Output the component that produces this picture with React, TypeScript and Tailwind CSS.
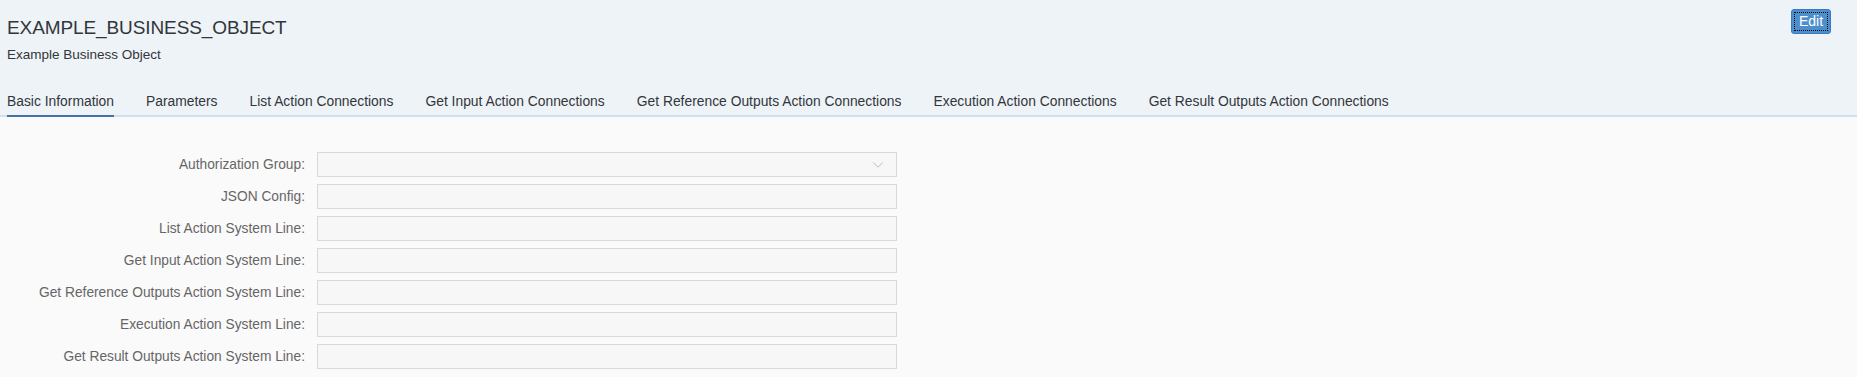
import { ChevronDown } from 'lucide-react'

const TABS = [
  'Basic Information',
  'Parameters',
  'List Action Connections',
  'Get Input Action Connections',
  'Get Reference Outputs Action Connections',
  'Execution Action Connections',
  'Get Result Outputs Action Connections',
]

const FIELDS: { label: string; select?: boolean }[] = [
  { label: 'Authorization Group:', select: true },
  { label: 'JSON Config:' },
  { label: 'List Action System Line:' },
  { label: 'Get Input Action System Line:' },
  { label: 'Get Reference Outputs Action System Line:' },
  { label: 'Execution Action System Line:' },
  { label: 'Get Result Outputs Action System Line:' },
]

export default function App() {
  return (
    <div className="min-h-[377px] bg-[#fafafa] font-['Liberation_Sans',Arial,sans-serif]">
      {/* object header */}
      <div className="bg-[#eef3f8]">
        <div className="flex items-start justify-between pl-[7px] pr-[26px]">
          <div className="pt-[15px]">
            <h1 className="text-[19px] leading-[25px] tracking-[-0.1px] text-[#32363a]">EXAMPLE_BUSINESS_OBJECT</h1>
            <p className="mt-[7px] text-[13.5px] leading-[16px] text-[#32363a]">Example Business Object</p>
          </div>
          <button className="mt-[9px] flex h-[25px] w-[40px] items-center justify-center rounded-[3px] border border-[#3a7bbf] bg-[#4d8fcc] text-[14px] text-white outline-1 outline-offset-[-4px] outline-dotted outline-black">
            Edit
          </button>
        </div>

        <div className="mt-[30px] flex gap-[32px] border-b-2 border-[#d1dfee] pl-[7px]">
          {TABS.map((tab, i) => (
            <div
              key={tab}
              className={
                'mb-[-2px] border-b-2 pb-[6px] text-[13.85px] leading-[16px] whitespace-nowrap text-[#32363a] ' +
                (i === 0 ? 'border-[#3f74a3]' : 'border-transparent')
              }
            >
              {tab}
            </div>
          ))}
        </div>
      </div>

      {/* form */}
      <div className="grid grid-cols-[305px_580px] items-center gap-x-3 gap-y-[7px] pt-[35px] pb-[7px]">
        {FIELDS.map((f) => (
          <div key={f.label} className="contents">
            <label className="text-right text-[13.75px] leading-[16px] text-[#666666]">{f.label}</label>
            <div className="flex h-[25px] items-center justify-end border border-[#d9d9d9] bg-[#f7f7f7] pr-[9px]">
              {f.select && <ChevronDown size={18} strokeWidth={1} className="text-[#aaaaaa]" />}
            </div>
          </div>
        ))}
      </div>
    </div>
  )
}
